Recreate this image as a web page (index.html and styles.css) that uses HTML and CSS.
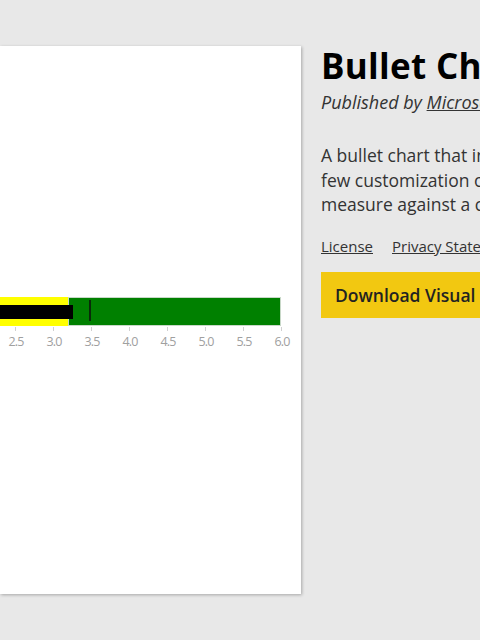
FILE: index.html
```html
<!DOCTYPE html>
<html>
<head>
<meta charset="utf-8">
<link rel="stylesheet" href="styles.css">
</head>
<body>
<div class="page">
  <div class="card">
    <svg class="chart" width="301" height="548" viewBox="0 0 301 548">
      <rect x="-10" y="251" width="78" height="29" fill="#ffff00"/>
      <rect x="68.5" y="251.5" width="212" height="28" fill="#008000" stroke="#c8d8c8" stroke-width="1"/>
      <rect x="-10" y="259" width="83" height="14" fill="#000"/>
      <rect x="89" y="254" width="2" height="21" fill="#0a2a0a"/>
      <g stroke="#d0d0d0" stroke-width="1">
        <line x1="15.5" y1="281" x2="15.5" y2="285"/>
        <line x1="53.5" y1="281" x2="53.5" y2="285"/>
        <line x1="91.5" y1="281" x2="91.5" y2="285"/>
        <line x1="129.5" y1="281" x2="129.5" y2="285"/>
        <line x1="167.5" y1="281" x2="167.5" y2="285"/>
        <line x1="205.5" y1="281" x2="205.5" y2="285"/>
        <line x1="243.5" y1="281" x2="243.5" y2="285"/>
        <line x1="281.5" y1="281" x2="281.5" y2="285"/>
      </g>
      <g class="axis" text-anchor="middle">
        <text x="16" y="300">2.5</text>
        <text x="54" y="300">3.0</text>
        <text x="92" y="300">3.5</text>
        <text x="130" y="300">4.0</text>
        <text x="168" y="300">4.5</text>
        <text x="206" y="300">5.0</text>
        <text x="244" y="300">5.5</text>
        <text x="282" y="300">6.0</text>
      </g>
    </svg>
  </div>
  <div class="info">
    <h1 class="title">Bullet Chart</h1>
    <p class="publisher">Published by <a class="link" href="#">Microsoft</a></p>
    <p class="desc">A bullet chart that includes four orientations and a<br>few customization options. Use to feature a single<br>measure against a comparative measure and ranges.</p>
    <div class="links">
      <a class="link" href="#">License</a>
      <a class="link" href="#">Privacy Statement</a>
    </div>
    <div class="actions">
      <button class="download">Download Visual</button>
    </div>
  </div>
</div>
</body>
</html>
```
FILE: styles.css
```css
html, body {
  margin: 0;
  padding: 0;
  width: 480px;
  height: 640px;
  overflow: hidden;
  background: #e8e8e8;
}
body {
  font-family: "Open Sans", "Noto Sans", sans-serif;
  color: #222;
}
.page {
  display: flex;
  flex-direction: row;
  padding-top: 46px;
}
.card {
  flex: 0 0 301px;
  height: 548px;
  background: #fff;
  box-shadow: 1px 1px 3px rgba(0,0,0,0.28);
}
.chart {
  display: block;
}
.axis text {
  font-family: "Open Sans", sans-serif;
  font-size: 12.5px;
  fill: #a0a0a0;
  letter-spacing: -0.9px;
}
.info {
  margin-left: 20px;
  white-space: nowrap;
}
.title {
  margin: 0;
  font-size: 35px;
  font-weight: 700;
  line-height: 40px;
  color: #000;
  letter-spacing: 0.3px;
}
.publisher {
  margin: 4px 0 0;
  font-size: 18px;
  font-style: italic;
  line-height: 24px;
  color: #333;
}
.link {
  color: #333;
  text-decoration: underline;
}
.desc {
  margin: 29px 0 0;
  font-size: 17.5px;
  line-height: 24.5px;
  color: #333;
}
.links {
  display: flex;
  gap: 19px;
  margin-top: 19px;
  font-size: 15px;
  line-height: 20px;
}
.actions {
  margin-top: 16px;
}
.download {
  background: #f2c811;
  border: none;
  height: 46px;
  padding: 0 14px;
  width: 240px;
  text-align: left;
  font-family: "Open Sans", sans-serif;
  font-size: 17.5px;
  font-weight: 600;
  color: #222;
}
```
